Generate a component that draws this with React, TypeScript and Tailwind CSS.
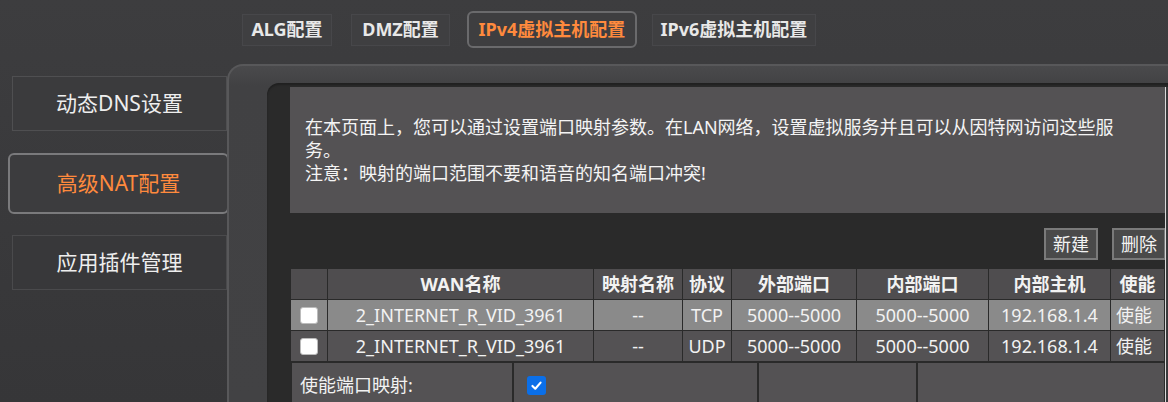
import React from "react";

const font = { fontFamily: '"Noto Sans", "Noto Sans CJK SC", sans-serif' };

function Tab({ label, active, w }: { label: string; active?: boolean; w: string }) {
  return (
    <div
      className={
        active
          ? `${w} h-[37px] flex items-center justify-center rounded-[6px] border-2 border-[#6a6a6c] bg-[#3e3e40] text-[#ff8a3d] font-bold text-[18px]`
          : `${w} h-[32px] flex items-center justify-center border border-[#47474a] bg-[#3f3f41] text-[#e8e8e8] font-bold text-[18px]`
      }
    >
      {label}
    </div>
  );
}

function Check({ blue }: { blue?: boolean }) {
  if (blue)
    return (
      <div className="w-[19px] h-[19px] rounded-[3px] bg-[#0b6fe8] flex items-center justify-center">
        <svg width="13" height="13" viewBox="0 0 16 16">
          <path d="M3 8.5 L6.5 12 L13 4.5" stroke="white" strokeWidth="2.6" fill="none" strokeLinecap="round" strokeLinejoin="round" />
        </svg>
      </div>
    );
  return <div className="w-[18px] h-[17px] rounded-[3px] bg-white border border-[#bbb]" />;
}

const cols = "grid grid-cols-[36px_265px_88px_48px_124px_131px_121px_53px] gap-x-px";

function Row({ bg, proto }: { bg: string; proto: string }) {
  const c = `${bg} h-[30px] flex items-center justify-center text-[18px] text-[#f2f2f2] whitespace-nowrap overflow-hidden`;
  return (
    <div className={cols}>
      <div className={c}><Check /></div>
      <div className={c}>2_INTERNET_R_VID_3961</div>
      <div className={c}>--</div>
      <div className={c}>{proto}</div>
      <div className={c}>5000--5000</div>
      <div className={c}>5000--5000</div>
      <div className={c}>192.168.1.4</div>
      <div className={`${c} justify-start pl-[5px]`}>使能</div>
    </div>
  );
}

export default function App() {
  const head = "bg-[#4f4d4f] h-[30px] flex items-center justify-center text-[18px] font-bold text-[#f2f2f2] whitespace-nowrap overflow-hidden";
  return (
    <div
      style={font}
      className="w-[1168px] h-[402px] overflow-hidden bg-gradient-to-b from-[#3d3d3f] to-[#363638] flex flex-col"
    >
      {/* top tabs */}
      <div className="h-[64px] pt-[11px] pl-[242px] flex items-start">
        <div className="flex items-center h-[37px]">
          <Tab label="ALG配置" w="w-[90px]" />
          <div className="w-[19px]" />
          <Tab label="DMZ配置" w="w-[99px]" />
          <div className="w-[17px]" />
          <Tab label="IPv4虚拟主机配置" w="w-[170px]" active />
          <div className="w-[15px]" />
          <Tab label="IPv6虚拟主机配置" w="w-[164px]" />
        </div>
      </div>

      <div className="flex flex-1 min-h-0">
        {/* sidebar */}
        <div className="w-[227px] pt-[12px] flex flex-col">
          <div className="ml-[12px] w-[215px] h-[55px] border border-[#4f4f51] bg-[#3b3b3d] flex items-center justify-center text-[21px] text-[#eeeeee]">
            动态DNS设置
          </div>
          <div className="mt-[22px] ml-[8px] w-[221px] h-[61px] rounded-[6px] border-2 border-[#7a7a7c] bg-[#3c3c3e] flex items-center justify-center text-[21px] text-[#ff8a3d]">
            高级NAT配置
          </div>
          <div className="mt-[21px] ml-[12px] w-[215px] h-[55px] border border-[#4a4a4c] bg-[#38383a] flex items-center justify-center text-[21px] text-[#eeeeee]">
            应用插件管理
          </div>
        </div>

        {/* main frame */}
        <div className="flex-1 rounded-tl-[16px] border-t-2 border-l-2 border-[#58585a] bg-gradient-to-b from-[#4a4a4c] via-[#414143] via-[6%] to-[#424244] pt-[17px] pl-[38px] flex flex-col">
          <div className="flex-1 rounded-tl-[12px] bg-[#2a2a2a] shadow-[inset_0_2px_2px_rgba(0,0,0,0.25)] pt-[4px] pl-[23px] flex">
            <div className="w-[875px] flex flex-col">
              {/* info box */}
              <div className="h-[126px] shrink-0 bg-[#545254] pt-[29px] pl-[15px] pr-[30px] text-[18px] leading-[23px] text-[#f4f4f4]">
                <div>在本页面上，您可以通过设置端口映射参数。在LAN网络，设置虚拟服务并且可以从因特网访问这些服务。</div>
                <div>注意：映射的端口范围不要和语音的知名端口冲突!</div>
              </div>

              {/* buttons */}
              <div className="mt-[15px] flex justify-end gap-[14px] mr-[-1px]">
                <div className="w-[54px] h-[32px] border-2 border-[#7a7a7a] bg-[#4a4a4a] flex items-center justify-center text-[18px] text-[#f2f2f2]">新建</div>
                <div className="w-[54px] h-[32px] border-2 border-[#7a7a7a] bg-[#4a4a4a] flex items-center justify-center text-[18px] text-[#f2f2f2]">删除</div>
              </div>

              {/* table */}
              <div className="mt-[9px] ml-[1px] w-[873px] flex flex-col gap-y-px bg-[#2a2a2a]">
                <div className={cols}>
                  <div className={head}></div>
                  <div className={head}>WAN名称</div>
                  <div className={head}>映射名称</div>
                  <div className={head}>协议</div>
                  <div className={head}>外部端口</div>
                  <div className={head}>内部端口</div>
                  <div className={head}>内部主机</div>
                  <div className={head}>使能</div>
                </div>
                <Row bg="bg-[#8a8a8a]" proto="TCP" />
                <Row bg="bg-[#545254]" proto="UDP" />
              </div>

              {/* enable row */}
              <div className="mt-[2px] ml-[2px] w-[871px] grid grid-cols-[220px_243px_157px_246px] gap-x-[2px]">
                <div className="h-[44px] bg-[#545254] flex items-center pl-[8px] text-[18px] text-[#f2f2f2]">使能端口映射:</div>
                <div className="h-[44px] bg-[#545254] flex items-center pl-[13px]"><Check blue /></div>
                <div className="h-[44px] bg-[#545254]" />
                <div className="h-[44px] bg-[#545254]" />
              </div>
            </div>
            <div className="w-px bg-[#d8d8d8]" />
            <div className="flex-1 bg-[#3a3a3c]" />
          </div>
        </div>
      </div>
    </div>
  );
}
